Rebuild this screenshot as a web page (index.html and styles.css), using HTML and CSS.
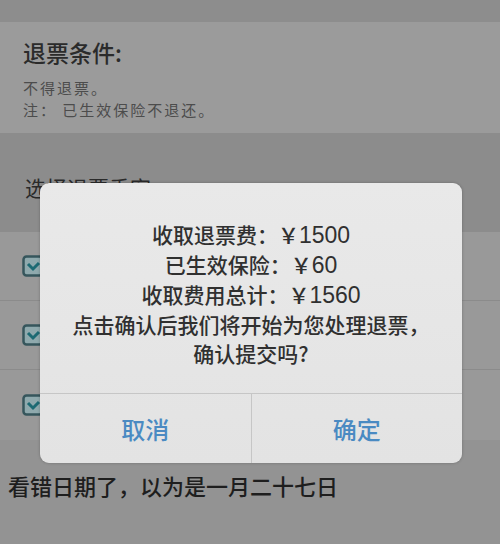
FILE: index.html
```html
<!DOCTYPE html>
<html lang="zh-CN">
<head>
<meta charset="utf-8">
<link rel="stylesheet" href="styles.css">
</head>
<body>
<div class="page">
  <div class="topbar"></div>
  <section class="cond">
    <h2 class="cond-title">退票条件:</h2>
    <p class="cond-line">不得退票。</p>
    <p class="cond-line">注：&nbsp;已生效保险不退还。</p>
  </section>
  <section class="pass-head">选择退票乘客</section>
  <div class="rows">
    <div class="row"><svg class="check" viewBox="0 0 22 22"><rect x="1.5" y="1.5" width="19" height="19" rx="3" fill="#8fa9ad" stroke="#36565c" stroke-width="2.5"/><path d="M6 9 L11 14 L17 8" fill="none" stroke="#1d6a73" stroke-width="3"/></svg></div>
    <div class="row"><svg class="check" viewBox="0 0 22 22"><rect x="1.5" y="1.5" width="19" height="19" rx="3" fill="#8fa9ad" stroke="#36565c" stroke-width="2.5"/><path d="M6 9 L11 14 L17 8" fill="none" stroke="#1d6a73" stroke-width="3"/></svg></div>
    <div class="row last"><svg class="check" viewBox="0 0 22 22"><rect x="1.5" y="1.5" width="19" height="19" rx="3" fill="#8fa9ad" stroke="#36565c" stroke-width="2.5"/><path d="M6 9 L11 14 L17 8" fill="none" stroke="#1d6a73" stroke-width="3"/></svg></div>
  </div>
  <div class="comment">看错日期了，以为是一月二十七日</div>
</div>

<div class="dialog">
  <div class="dialog-body">
    <p>收取退票费：￥<span class="num">1500</span></p>
    <p>已生效保险：￥<span class="num">60</span></p>
    <p>收取费用总计：￥<span class="num">1560</span></p>
    <p>点击确认后我们将开始为您处理退票，</p>
    <p>确认提交吗?</p>
  </div>
  <div class="dialog-actions">
    <button class="btn">取消</button>
    <button class="btn">确定</button>
  </div>
</div>
</body>
</html>
```

FILE: styles.css
```css
* { box-sizing: border-box; }
html, body {
  margin: 0;
  padding: 0;
  background: #949494;
  font-family: "Noto Sans CJK SC", "Noto Sans", sans-serif;
}
.page {
  width: 500px;
  height: 544px;
  overflow: hidden;
  display: flex;
  flex-direction: column;
}
.topbar {
  height: 22px;
  background: #8d8d8d;
}
.cond {
  height: 111px;
  background: #9b9b9b;
  padding: 15px 0 0 23px;
}
.cond-title {
  margin: 0 0 10px;
  font-size: 23px;
  line-height: 30px;
  font-weight: 500;
  color: #2b2b2b;
}
.cond-line {
  margin: 0;
  font-size: 15px;
  line-height: 22px;
  letter-spacing: 2px;
  color: #4c4c4c;
}
.pass-head {
  height: 99px;
  background: #8c8c8c;
  padding: 40px 0 0 25px;
  font-size: 21px;
  line-height: 28px;
  color: #2a2a2a;
}
.rows {
  background: #999999;
}
.row {
  height: 69px;
  display: flex;
  align-items: center;
  padding-left: 22px;
  border-bottom: 1px solid #8b8b8b;
}
.row.last { border-bottom: none; height: 70px; }
.check {
  width: 22px;
  height: 22px;
  display: block;
}
.comment {
  flex: 1;
  background: #939393;
  padding: 30px 0 0 8px;
  font-size: 22px;
  line-height: 30px;
  color: #1e1e1e;
  font-weight: 500;
}

.dialog {
  position: absolute;
  left: 40px;
  top: 183px;
  width: 422px;
  height: 280px;
  background: linear-gradient(#e9e9e9, #e3e3e3);
  border-radius: 9px;
  box-shadow: 0 0 3px rgba(0,0,0,0.25);
  display: flex;
  flex-direction: column;
  overflow: hidden;
}
.dialog-body {
  height: 211px;
  padding-top: 37px;
  text-align: center;
  border-bottom: 1px solid #c6c6c6;
}
.dialog-body p {
  margin: 0;
  font-size: 21px;
  line-height: 29px;
  font-weight: 500;
  color: #303030;
}
.num {
  font-family: "Liberation Sans", Arial, sans-serif;
  font-size: 23px;
  font-weight: 400;
}
.dialog-actions {
  flex: 1;
  display: flex;
}
.btn {
  flex: 1;
  border: none;
  background: transparent;
  font-family: "Noto Sans CJK SC", sans-serif;
  font-size: 24px;
  font-weight: 500;
  color: #4a8ac2;
  padding: 0;
}
.btn + .btn {
  border-left: 1px solid #c6c6c6;
}
```
